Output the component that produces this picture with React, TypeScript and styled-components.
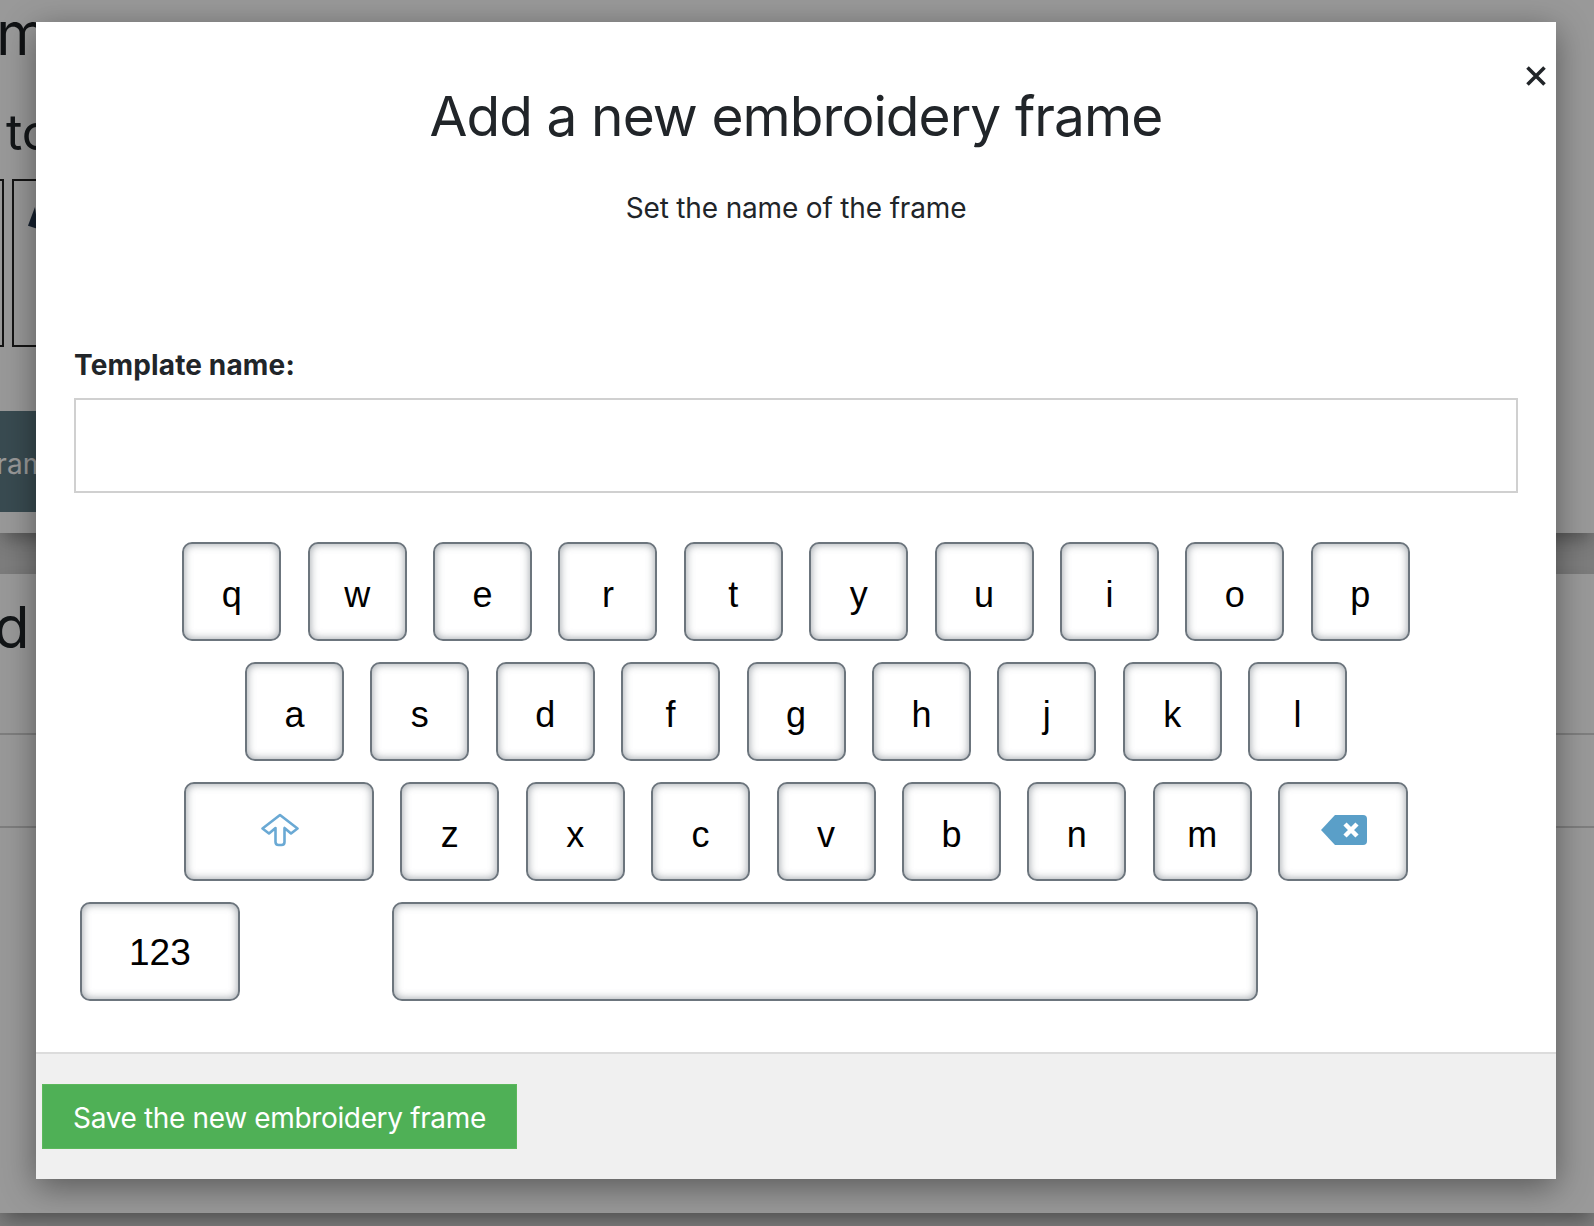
import React, { FC } from 'react';
import styled, { createGlobalStyle } from 'styled-components';

const ROWS = ['qwertyuiop', 'asdfghjkl', 'zxcvbnm'];

const GlobalStyle = createGlobalStyle`
  html, body {
    margin: 0;
    height: 100%;
    overflow: hidden;
    background: #d0d0d0;
    font-family: Inter, "Liberation Sans", sans-serif;
    color: #212529;
  }
  * { box-sizing: border-box; }
`;

const Page = styled.div`
  position: relative;
  width: 1594px;
  height: 1226px;
  overflow: hidden;
  display: flex;
  flex-direction: column;
  gap: 41px;
`;

const Card = styled.section<{ $height: number }>`
  height: ${({ $height }) => $height}px;
  flex-shrink: 0;
  background: #fff;
  overflow: hidden;
  box-shadow: 0 10px 18px -4px rgba(0, 0, 0, 0.35);
`;

const PageHeading = styled.h1`
  margin: -2px 0 0 -94px;
  font-size: 60px;
  line-height: 70px;
  font-weight: 400;
  white-space: nowrap;
  color: #1c1f22;
`;

const PageSub = styled.h2`
  margin: 34px 0 0 6px;
  font-size: 50px;
  line-height: 60px;
  font-weight: 400;
  white-space: nowrap;
`;

const Thumbs = styled.div`
  display: flex;
  gap: 8px;
  margin: 17px 0 0 -196px;
`;

const Thumb = styled.div`
  width: 200px;
  height: 168px;
  border: 2px solid #222;
  padding: 26px 12px;
`;

const ThumbMark = styled.div`
  width: 10px;
  height: 22px;
  margin-left: 2px;
  background: #26384f;
  clip-path: polygon(70% 0, 100% 100%, 0 85%);
`;

const DarkButton = styled.div`
  width: 300px;
  height: 101px;
  margin: 64px 0 0 -14px;
  padding-top: 4px;
  display: flex;
  align-items: center;
  background: #5f7d88;
  color: #fff;
  font-size: 28px;
  white-space: nowrap;
`;

const SecondHeading = styled.h2`
  margin: 18px 0 0 -6px;
  font-size: 58px;
  line-height: 70px;
  font-weight: 400;
  white-space: nowrap;
`;

const Rule = styled.hr<{ $gap: number }>`
  margin: ${({ $gap }) => $gap}px 0 0;
  border: 0;
  border-top: 2px solid #d3d3d3;
`;

const Overlay = styled.div`
  position: absolute;
  inset: 0;
  background: rgba(0, 0, 0, 0.4);
`;

const Modal = styled.div`
  position: absolute;
  left: 36px;
  top: 22px;
  width: 1520px;
  height: 1157px;
  display: flex;
  flex-direction: column;
  background: #fff;
  box-shadow: 0 8px 32px rgba(0, 0, 0, 0.42);
`;

const CloseButton = styled.button`
  position: absolute;
  right: 10px;
  top: 44px;
  width: 20px;
  height: 20px;
  padding: 0;
  border: 0;
  background: none;
  display: flex;

  svg {
    width: 20px;
    height: 20px;
  }
`;

const ModalBody = styled.div`
  flex: 1;
  padding: 58px 38px 0;
`;

const Title = styled.h3`
  margin: 0;
  text-align: center;
  font-size: 55px;
  line-height: 72px;
  font-weight: 400;
  letter-spacing: -0.93px;
`;

const Subtitle = styled.p`
  margin: 36px 0 0;
  text-align: center;
  font-size: 28px;
  line-height: 40px;
  letter-spacing: -0.16px;
`;

const FieldLabel = styled.label`
  display: block;
  margin-top: 117px;
  font-size: 28px;
  line-height: 40px;
  font-weight: 700;
  letter-spacing: 0.15px;
`;

const TextField = styled.input`
  display: block;
  width: 100%;
  height: 95px;
  margin-top: 13px;
  border: 2px solid #d0d0d0;
  background: #fff;
  outline: none;
`;

const Keyboard = styled.div`
  display: flex;
  flex-direction: column;
  gap: 21px;
  margin-top: 49px;
  font-family: "Liberation Sans", Arial, sans-serif;
`;

const KeyRow = styled.div`
  display: flex;
  justify-content: center;
  gap: 26.4px;
`;

const Key = styled.button<{ $width?: number; $hidden?: boolean }>`
  width: ${({ $width }) => $width ?? 99}px;
  height: 99px;
  flex-shrink: 0;
  padding: 6px 0 0;
  display: flex;
  align-items: center;
  justify-content: center;
  visibility: ${({ $hidden }) => ($hidden ? 'hidden' : 'visible')};
  background: #fff;
  border: 2px solid #6c757d;
  border-radius: 10px;
  box-shadow: inset 0 0 8px rgba(108, 117, 125, 0.7);
  color: #000;
  font-family: inherit;
  font-size: 36px;
  line-height: 1;
`;

const NumberKey = styled(Key)`
  padding: 2px 0 0;
  font-size: 37px;
`;

const IconKey = styled(Key)`
  padding: 0 0 3px 2px;
`;

const Footer = styled.div`
  height: 127px;
  padding: 30px 6px 0;
  background: #f0f0f0;
  border-top: 2px solid #dcdcdc;
`;

const SaveButton = styled.button`
  display: block;
  width: 475px;
  height: 65px;
  padding: 2px 0 0;
  border: 1px solid #5cb85c;
  background: #4fb056;
  color: #fff;
  font-family: inherit;
  font-size: 28px;
  letter-spacing: -0.35px;
`;

const ShiftIcon: FC = () => (
  <svg width="38" height="34" viewBox="0 0 38 34" fill="none">
    <path
      d="M19 2 L36.5 15.5 L30 20.5 L23.5 15 V29 Q23.5 32 20.5 32 H17.5 Q14.5 32 14.5 29 V15 L8 20.5 L1.5 15.5 Z"
      stroke="#6aa9d4"
      strokeWidth="2.6"
      strokeLinejoin="round"
    />
  </svg>
);

const BackspaceIcon: FC = () => (
  <svg width="46" height="32" viewBox="0 0 46 32">
    <path d="M14 1 H42 Q46 1 46 5 V27 Q46 31 42 31 H14 L0 16 Z" fill="#5a9fc8" />
    <path d="M24 10 L36 22 M36 10 L24 22" stroke="#fff" strokeWidth="4.5" />
  </svg>
);

const CloseIcon: FC = () => (
  <svg viewBox="0 0 20 20">
    <path d="M1.5 1.5 L18.5 18.5 M18.5 1.5 L1.5 18.5" stroke="#212529" strokeWidth="3.6" />
  </svg>
);

export default function App() {
  return (
    <Page>
      <GlobalStyle />

      <Card $height={533}>
        <PageHeading>Fram</PageHeading>
        <PageSub>to</PageSub>
        <Thumbs>
          <Thumb />
          <Thumb>
            <ThumbMark />
          </Thumb>
        </Thumbs>
        <DarkButton>frame</DarkButton>
      </Card>

      <Card $height={639}>
        <SecondHeading>d</SecondHeading>
        <Rule $gap={71} />
        <Rule $gap={91} />
      </Card>

      <Overlay />

      <Modal>
        <CloseButton aria-label="Close">
          <CloseIcon />
        </CloseButton>

        <ModalBody>
          <Title>Add a new embroidery frame</Title>
          <Subtitle>Set the name of the frame</Subtitle>

          <FieldLabel>Template name:</FieldLabel>
          <TextField type="text" />

          <Keyboard>
            <KeyRow>
              {ROWS[0].split('').map((k) => (
                <Key key={k}>{k}</Key>
              ))}
            </KeyRow>
            <KeyRow>
              {ROWS[1].split('').map((k) => (
                <Key key={k}>{k}</Key>
              ))}
            </KeyRow>
            <KeyRow>
              <IconKey $width={190}>
                <ShiftIcon />
              </IconKey>
              {ROWS[2].split('').map((k) => (
                <Key key={k}>{k}</Key>
              ))}
              <IconKey $width={130}>
                <BackspaceIcon />
              </IconKey>
            </KeyRow>
            <KeyRow>
              <NumberKey $width={160}>123</NumberKey>
              <Key $hidden />
              <Key $width={866} />
              <Key $hidden $width={228} />
            </KeyRow>
          </Keyboard>
        </ModalBody>

        <Footer>
          <SaveButton>Save the new embroidery frame</SaveButton>
        </Footer>
      </Modal>
    </Page>
  );
}
